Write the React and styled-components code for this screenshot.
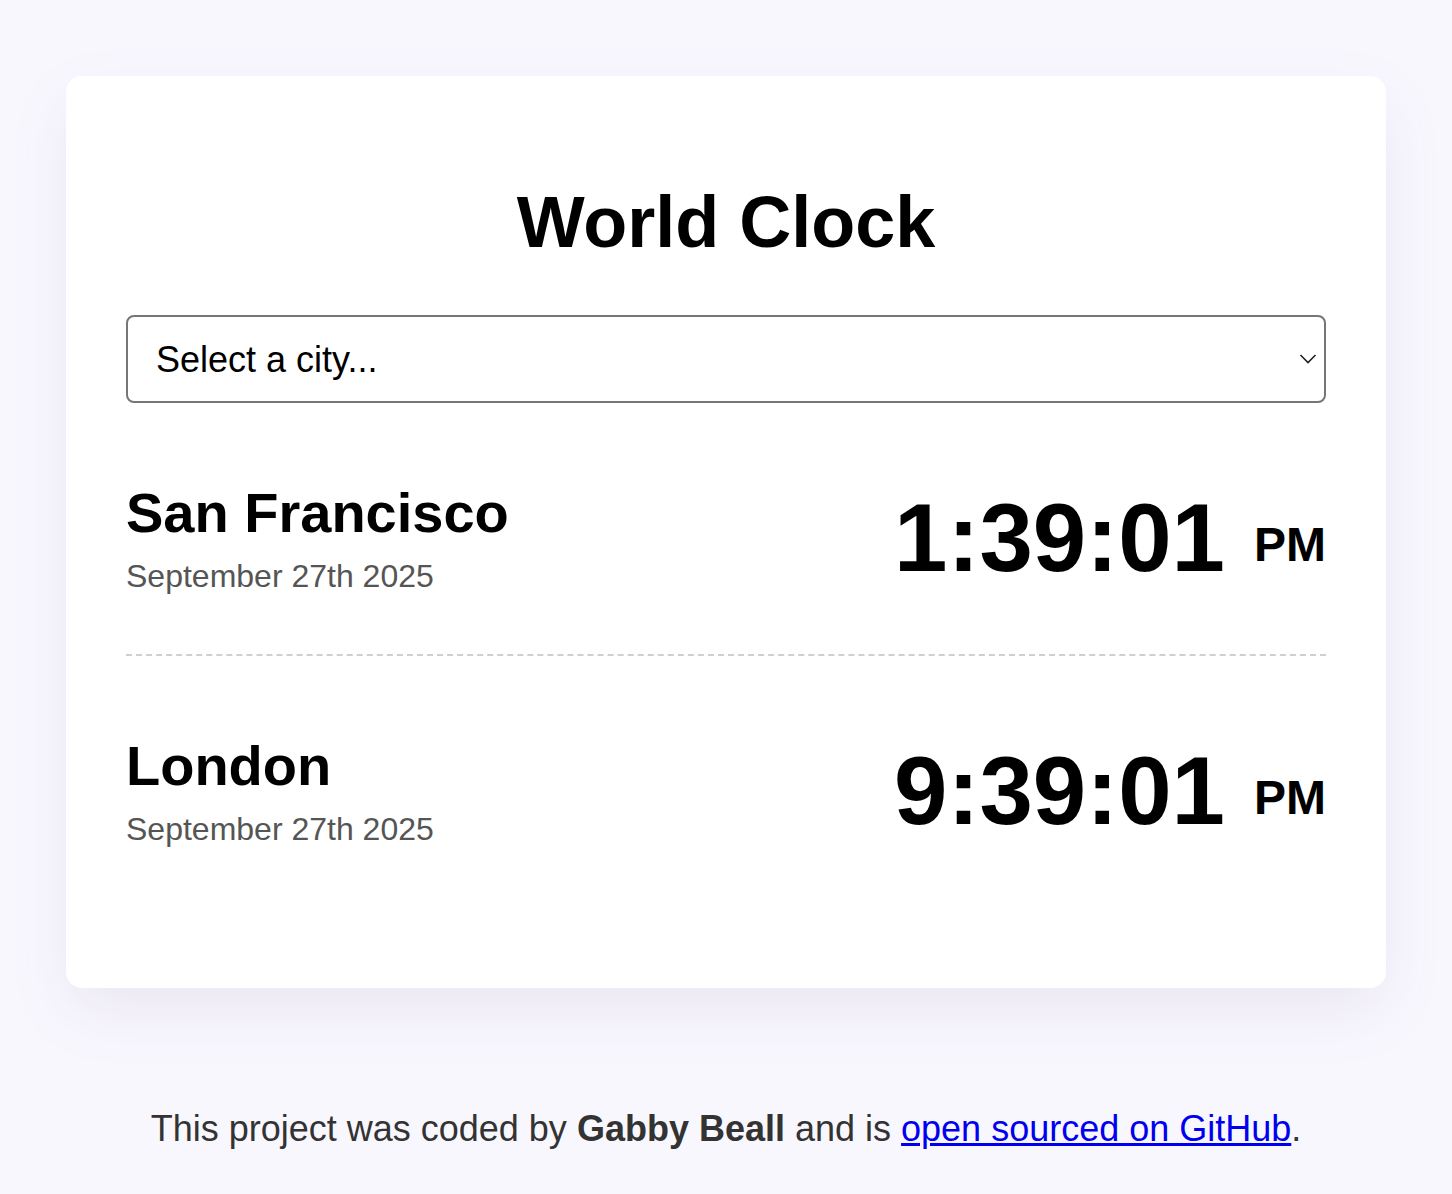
import React, { useState } from 'react';
import styled, { createGlobalStyle } from 'styled-components';

const GlobalStyle = createGlobalStyle`
  * {
    box-sizing: border-box;
  }

  body {
    margin: 0;
    background: #f9f7fe;
    font-family: "Liberation Sans", Arial, Helvetica, sans-serif;
    color: #000;
  }
`;

const Container = styled.div`
  width: 1320px;
  margin: 76px auto 0;
`;

const Card = styled.main`
  background: #fff;
  border-radius: 16px;
  padding: 105px 60px 81px;
  box-shadow: 0 24px 64px rgba(60, 50, 120, 0.08);
`;

const Title = styled.h1`
  margin: 0 0 52px;
  font-size: 72px;
  font-weight: 700;
  text-align: center;
`;

const SelectWrap = styled.div`
  position: relative;
`;

const CitySelect = styled.select`
  appearance: none;
  width: 100%;
  height: 88px;
  padding: 0 60px 0 28px;
  border: 2px solid #767676;
  border-radius: 8px;
  background: #fff;
  font-family: "Liberation Sans", Arial, sans-serif;
  font-size: 36px;
  color: #000;
`;

const Chevron = styled.svg`
  position: absolute;
  right: 9px;
  top: 38px;
  pointer-events: none;
`;

const Row = styled.div`
  display: flex;
  justify-content: space-between;
  align-items: center;
  padding: 77px 0 59px;
  border-bottom: ${(p) => (p.last ? 'none' : '2px dashed #cfcfcf')};
`;

const CityName = styled.h2`
  margin: 0 0 13px;
  font-size: 56px;
  font-weight: 700;
`;

const CityDate = styled.div`
  font-size: 32px;
  color: #555;
`;

const Time = styled.div`
  font-size: 96px;
  font-weight: 700;
  white-space: nowrap;
`;

const Meridiem = styled.span`
  display: inline-block;
  margin-left: 29px;
  font-size: 48px;
  vertical-align: 10px;
`;

const Footer = styled.footer`
  margin-top: 120px;
  text-align: center;
  font-size: 36px;
  color: #333;

  a {
    color: #0000ee;
  }
`;

const cities = [
  { name: 'San Francisco', date: 'September 27th 2025', time: '1:39:01', meridiem: 'PM' },
  { name: 'London', date: 'September 27th 2025', time: '9:39:01', meridiem: 'PM' },
];

export default function App() {
  const [city, setCity] = useState('');

  return (
    <>
      <GlobalStyle />
      <Container>
        <Card>
          <Title>World Clock</Title>
          <SelectWrap>
            <CitySelect value={city} onChange={(e) => setCity(e.target.value)}>
              <option value="">Select a city...</option>
              <option value="current">My current location</option>
              <option value="Europe/Paris">Paris</option>
              <option value="Asia/Tokyo">Tokyo</option>
              <option value="Australia/Sydney">Sydney</option>
            </CitySelect>
            <Chevron width="18" height="12" viewBox="0 0 18 12">
              <path d="M1.5 2 L9 9.5 L16.5 2" fill="none" stroke="#222" strokeWidth="1.6" />
            </Chevron>
          </SelectWrap>
          {cities.map((c, i) => (
            <Row key={c.name} last={i === cities.length - 1}>
              <div>
                <CityName>{c.name}</CityName>
                <CityDate>{c.date}</CityDate>
              </div>
              <Time>
                {c.time}
                <Meridiem>{c.meridiem}</Meridiem>
              </Time>
            </Row>
          ))}
        </Card>
        <Footer>
          This project was coded by <strong>Gabby Beall</strong> and is{' '}
          <a href="#github">open sourced on GitHub</a>.
        </Footer>
      </Container>
    </>
  );
}
